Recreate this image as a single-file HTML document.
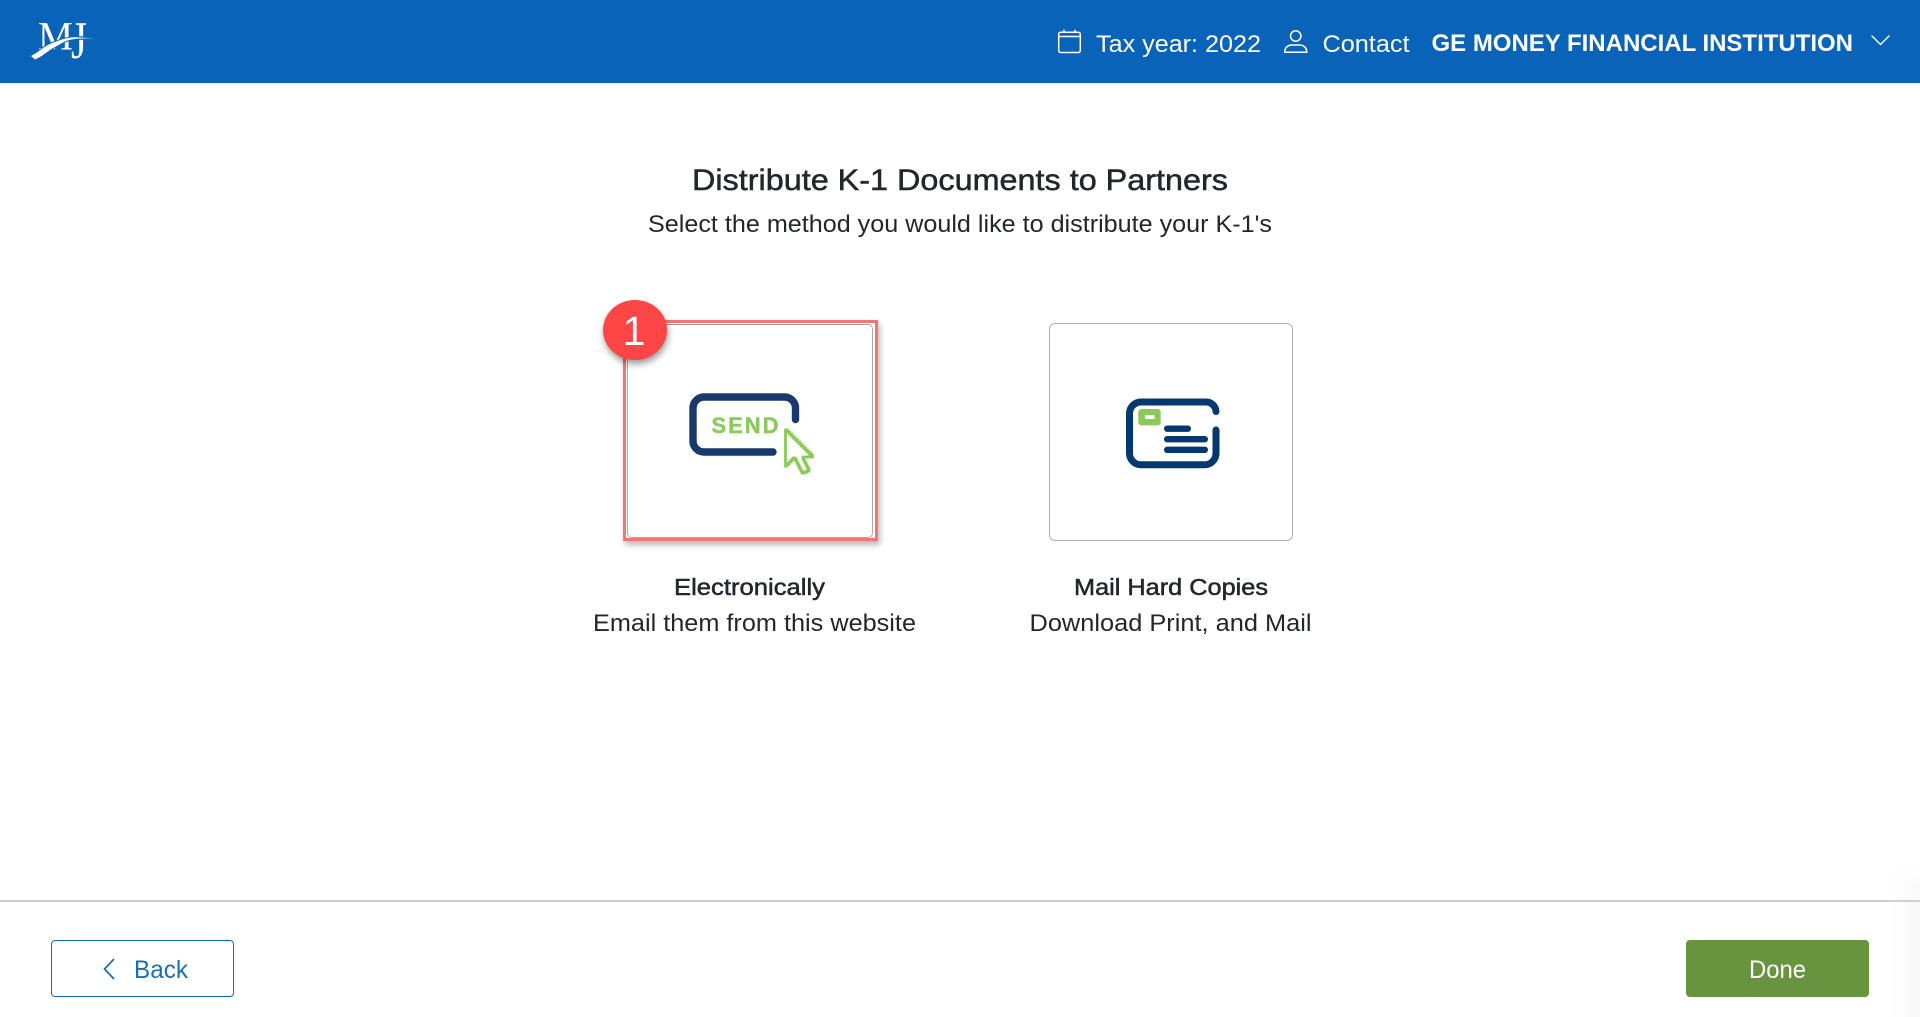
<!DOCTYPE html>
<html lang="en">
<head>
<meta charset="utf-8">
<title>Distribute K-1 Documents to Partners</title>
<style>
html,body{margin:0;padding:0;width:1920px;height:1017px;overflow:hidden;background:#fff;font-family:"Liberation Sans",sans-serif}
div{box-sizing:border-box;position:absolute}
#header{left:0;top:0;width:1920px;height:83px;background:#0964b9}
#fade{left:1890px;top:860px;width:30px;height:157px;background:linear-gradient(to right,rgba(248,248,248,0),rgba(248,248,248,1));-webkit-mask-image:linear-gradient(to bottom,transparent,#000 40px);mask-image:linear-gradient(to bottom,transparent,#000 40px)}
#hr{left:0;top:900px;width:1920px;height:1.5px;background:#cfcfcf}
#card1{left:623px;top:320px;width:255px;height:221px;border:3.5px solid #f67474;background:#fff;box-shadow:2px 4px 6px rgba(0,0,0,.28)}
#card1in{left:627px;top:323.5px;width:245.5px;height:214px;border:1.4px solid #aaa;border-top-color:#999;border-radius:5px;background:#fff}
#card2{left:1049px;top:323px;width:244px;height:218px;border:1.4px solid #b0b0b0;border-radius:6px;background:#fff}
#badge{left:603px;top:300px;width:64px;height:60px;border-radius:50%;background:#fc4545;box-shadow:1px 4px 7px rgba(0,0,0,.4)}
#back{left:51px;top:940px;width:183px;height:57px;border:1.6px solid #0b70bf;border-radius:4px;background:#fff}
#done{left:1686px;top:940px;width:183px;height:57px;border-radius:4px;background:#689440}
svg{position:absolute;left:0;top:0}
text{font-family:"Liberation Sans",sans-serif}
.w{fill:#fff}
.d{fill:#23262b}
.s{stroke:#23262b;stroke-width:.5px}
</style>
</head>
<body>
<div id="header"></div>
<div id="fade"></div>
<div id="hr"></div>
<div id="card1"></div>
<div id="card1in"></div>
<div id="card2"></div>
<div id="badge"></div>
<div id="back"></div>
<div id="done"></div>

<svg width="1920" height="1017" viewBox="0 0 1920 1017">
  <!-- Logo -->
  <text x="38" y="49.5" font-size="40" textLength="35" lengthAdjust="spacingAndGlyphs" style="font-family:'Liberation Serif',serif" fill="#fff">M</text>
  <text transform="translate(71 58) scale(1 1.38)" x="0" y="0" font-size="38" textLength="16" lengthAdjust="spacingAndGlyphs" style="font-family:'Liberation Serif',serif" fill="#fff">J</text>
  <defs>
    <linearGradient id="sw" x1="0" x2="1" y1="0" y2="0">
      <stop offset="0" stop-color="#fff"/><stop offset=".65" stop-color="#fff"/><stop offset="1" stop-color="#fff" stop-opacity="0"/>
    </linearGradient>
  </defs>
  <path d="M31 56C36 53 40 50.5 43 48C48 44.5 52 43 55 42C62 39 68 37.5 74 37.2C82 36.8 89 37.6 96 39.4C88 38.8 81 38.6 75 39C70 39.5 66 40.8 63 42.5C59 44.7 56 46.5 53 48C48 51 44 54.5 40 57L35 59.5Z" fill="#0964b9" stroke="#0964b9" stroke-width="2"/>
  <path d="M31 56C36 53 40 50.5 43 48C48 44.5 52 43 55 42C62 39 68 37.5 74 37.2C82 36.8 89 37.6 96 39.4C88 38.8 81 38.6 75 39C70 39.5 66 40.8 63 42.5C59 44.7 56 46.5 53 48C48 51 44 54.5 40 57L35 59.5Z" fill="url(#sw)"/>

  <!-- Header items -->
  <g fill="none" stroke="#fff" stroke-width="1.5" stroke-linecap="round" stroke-linejoin="round">
    <rect x="1058.7" y="32.2" width="21.6" height="20.3" rx="2"/>
    <path d="M1058.7 36.5H1080.3M1064 30.2V32.2M1075 30.2V32.2"/>
    <circle cx="1295.7" cy="36" r="5.2"/>
    <path d="M1284.7 52.2C1284.7 46.5 1289 45 1292 45H1299.5C1303 45 1306.8 47 1306.8 52.2Z"/>
    <path d="M1872 36L1880.5 44.5L1889 36" stroke-width="1.4"/>
  </g>
  <text class="w" x="1096" y="52" font-size="24" textLength="165" lengthAdjust="spacingAndGlyphs">Tax year: 2022</text>
  <text class="w" x="1322.5" y="52" font-size="24" textLength="87" lengthAdjust="spacingAndGlyphs">Contact</text>
  <text class="w" x="1431.5" y="51" font-size="24" font-weight="700" textLength="421.5" lengthAdjust="spacingAndGlyphs">GE MONEY FINANCIAL INSTITUTION</text>

  <!-- Headings -->
  <text class="d s" x="692" y="190" font-size="30" textLength="536" lengthAdjust="spacingAndGlyphs">Distribute K-1 Documents to Partners</text>
  <text class="d" x="648" y="232" font-size="24" textLength="624" lengthAdjust="spacingAndGlyphs">Select the method you would like to distribute your K-1's</text>

  <!-- Badge number -->
  <text x="634" y="345" font-size="41" fill="#fff" text-anchor="middle">1</text>

  <!-- SEND icon -->
  <path d="M795.5 419.5V408A11 11 0 0 0 784.5 397H704A11 11 0 0 0 693 408V441A11 11 0 0 0 704 452H773" fill="none" stroke="#17396b" stroke-width="7.4" stroke-linecap="round"/>
  <text x="711.5" y="433" font-size="22" font-weight="700" fill="#8aca58" stroke="#8aca58" stroke-width=".4" textLength="67" lengthAdjust="spacing">SEND</text>
  <path d="M785.5 430h2v2h2v2h2v2h2v2h2v2h2v2h2v2h2v2h2v2h2v2h2v2h2v2h2v2h1V457H803v2h1v2h1v2h1v2h1v2h1v2h1v2h-2v1h-2v1h-3v-2h-1v-2h-1v-2h-1v-2h-1v-2h-1v-2h-1v-2h-1v-1h-2v2h-2v2h-2v2h-2v2h-1.500Z" fill="#fff" stroke="#8aca58" stroke-width="2.8" stroke-linejoin="miter"/>

  <!-- Mail icon -->
  <path d="M1216 411.5A10 10 0 0 0 1206 402H1141A11.500 11.500 0 0 0 1129.500 413.500V453.300A11.500 11.500 0 0 0 1141 464.800H1204.500A11.500 11.500 0 0 0 1216 453.300V430" fill="none" stroke="#04386f" stroke-width="7" stroke-linecap="round"/>
  <rect x="1138.300" y="409" width="22.400" height="16.400" rx="3" fill="#8bc95a"/>
  <rect x="1145" y="415" width="9.400" height="4" fill="#fff"/>
  <rect x="1164" y="425.500" width="27" height="6.400" rx="3.200" fill="#04386f"/>
  <rect x="1164" y="436" width="44" height="6.400" rx="3.200" fill="#04386f"/>
  <rect x="1164" y="446.600" width="44" height="6.400" rx="3.200" fill="#04386f"/>

  <!-- Labels -->
  <text class="d s" x="674" y="595" font-size="23" textLength="151" lengthAdjust="spacingAndGlyphs">Electronically</text>
  <text class="d" x="593" y="631" font-size="24" textLength="323" lengthAdjust="spacingAndGlyphs">Email them from this website</text>
  <text class="d s" x="1074" y="595" font-size="23" textLength="194" lengthAdjust="spacingAndGlyphs">Mail Hard Copies</text>
  <text class="d" x="1029.500" y="631" font-size="24" textLength="282" lengthAdjust="spacingAndGlyphs">Download Print, and Mail</text>

  <!-- Buttons -->
  <path d="M114 959L104.500 969L114 979" fill="none" stroke="#0b70bf" stroke-width="1.700"/>
  <text x="134" y="978" font-size="25" fill="#1a70b8" textLength="54" lengthAdjust="spacingAndGlyphs">Back</text>
  <text x="1749" y="978" font-size="25" fill="#fff" textLength="57" lengthAdjust="spacingAndGlyphs">Done</text>
</svg>
</body>
</html>
